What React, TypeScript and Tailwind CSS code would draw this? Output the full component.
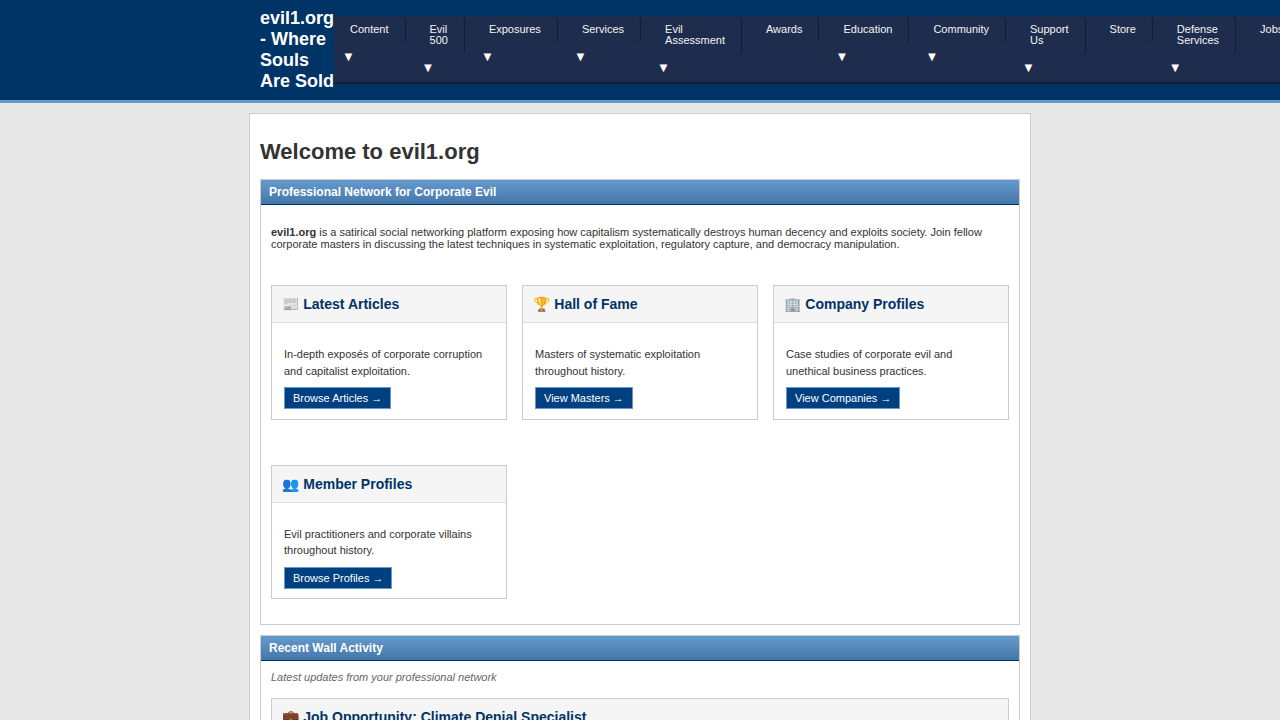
import React from 'react';

type NavItem = { lines: string[]; menu?: boolean };

const navItems: NavItem[] = [
  { lines: ['Content'], menu: true },
  { lines: ['Evil', '500'], menu: true },
  { lines: ['Exposures'], menu: true },
  { lines: ['Services'], menu: true },
  { lines: ['Evil', 'Assessment'], menu: true },
  { lines: ['Awards'] },
  { lines: ['Education'], menu: true },
  { lines: ['Community'], menu: true },
  { lines: ['Support', 'Us'], menu: true },
  { lines: ['Store'] },
  { lines: ['Defense', 'Services'], menu: true },
  { lines: ['Jobs'] },
];

const cards = [
  { icon: '📰', title: 'Latest Articles', text: ['In-depth exposés of corporate corruption', 'and capitalist exploitation.'], action: 'Browse Articles →' },
  { icon: '🏆', title: 'Hall of Fame', text: ['Masters of systematic exploitation', 'throughout history.'], action: 'View Masters →' },
  { icon: '🏢', title: 'Company Profiles', text: ['Case studies of corporate evil and', 'unethical business practices.'], action: 'View Companies →' },
  { icon: '👥', title: 'Member Profiles', text: ['Evil practitioners and corporate villains', 'throughout history.'], action: 'Browse Profiles →' },
];

function Lines({ lines }: { lines: string[] }) {
  return (
    <>
      {lines.map((line) => (
        <span key={line} className="block whitespace-nowrap">{line}</span>
      ))}
    </>
  );
}

function Header() {
  return (
    <header className="flex h-[103px] items-center border-b-[3px] border-[#6699cc] bg-[#003366] pl-[260px]">
      <h1 className="w-[74px] shrink-0 text-[18px] leading-[21px] font-bold text-white">
        <Lines lines={['evil1.org', '- Where', 'Souls', 'Are Sold']} />
      </h1>
      <nav className="flex h-[68px] shrink-0 items-start gap-2 border-b-2 border-[#0f1f33] bg-[#1e2d4d] pr-4">
        {navItems.map((item) => (
          <div key={item.lines.join(' ')} className="shrink-0">
            <a className="block rounded border-r border-[#0f1f33] px-4 py-2 text-[11px] leading-[11px] text-[#f4f4f4]">
              <Lines lines={item.lines} />
            </a>
            {item.menu && <span className="mt-[7px] block pl-2 text-[13px] leading-[14px] text-white">▼</span>}
          </div>
        ))}
      </nav>
    </header>
  );
}

function Panel({ title, children }: { title: string; children: React.ReactNode }) {
  return (
    <section className="mb-[10px] border border-[#cccccc] bg-white">
      <h2 className="h-[25px] border-b border-[#003366] bg-linear-to-b from-[#6699cc] to-[#4477aa] pl-2 text-[12px] leading-[24px] font-bold text-white">{title}</h2>
      <div className="p-[10px]">{children}</div>
    </section>
  );
}

function CardTitle({ icon, title }: { icon: string; title: string }) {
  return (
    <h3 className="h-[37px] border-b border-[#dddddd] bg-[#f5f5f5] pl-[10px] text-[14px] leading-[36px] font-bold text-[#003366]">
      <span className="mr-[0.4px]">{icon}</span> {title}
    </h3>
  );
}

export default function App() {
  return (
    <div className="h-[720px] overflow-hidden bg-[#e8e8e8] font-['Liberation_Sans',Arial,sans-serif] text-[11px] leading-[12px] text-[#333333]">
      <Header />
      <main className="mx-auto mt-[10px] w-[782px] border border-[#cccccc] bg-white px-[10px] pb-[10px]">
        <h1 className="pt-[25px] pb-[15px] text-[22px] leading-[25px] font-bold">Welcome to evil1.org</h1>
        <Panel title="Professional Network for Corporate Evil">
          <p className="mt-[11px]">
            <strong>evil1.org</strong> is a satirical social networking platform exposing how capitalism systematically destroys human decency and exploits society. Join fellow corporate masters in discussing the latest techniques in systematic exploitation, regulatory capture, and democracy manipulation.
          </p>
          <div className="mt-[35px] mb-[15px] grid grid-cols-3 gap-x-[15px] gap-y-[45px]">
            {cards.map((card) => (
              <article key={card.title} className="h-[134.5px] border border-[#cccccc] bg-white">
                <CardTitle icon={card.icon} title={card.title} />
                <div className="px-3 pt-[23px]">
                  <p className="mb-2 leading-[16.5px]"><Lines lines={card.text} /></p>
                  <a className="inline-block h-[22px] border border-[#6699cc] bg-[#004080] px-2 leading-[20px] text-white">{card.action}</a>
                </div>
              </article>
            ))}
          </div>
        </Panel>
        <Panel title="Recent Wall Activity">
          <p className="mb-[15px] text-[#666666] italic">Latest updates from your professional network</p>
          <article className="h-[134px] border border-[#cccccc] bg-white">
            <CardTitle icon="💼" title="Job Opportunity: Climate Denial Specialist" />
          </article>
        </Panel>
      </main>
    </div>
  );
}
